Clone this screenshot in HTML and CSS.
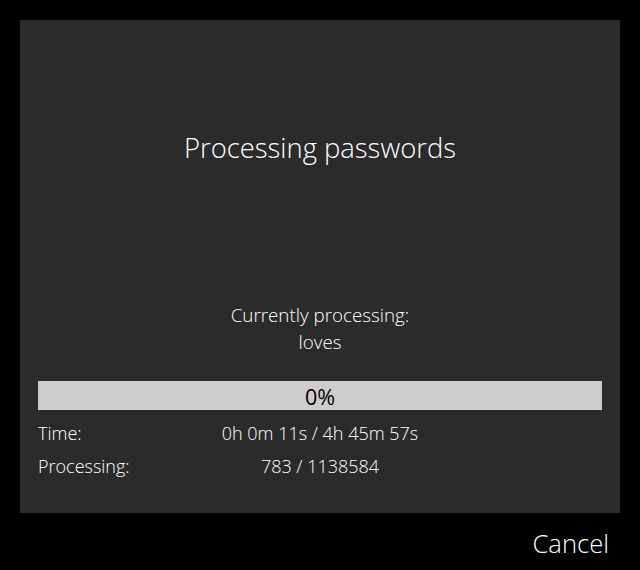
FILE: index.html
```html
<!DOCTYPE html>
<html>
<head>
<meta charset="utf-8">
<link rel="stylesheet" href="styles.css">
</head>
<body>
<div class="screen">
  <div class="panel">
    <h1 class="title">Processing passwords</h1>
    <div class="current">
      <div>Currently processing:</div>
      <div>loves</div>
    </div>
    <div class="bar"><span>0%</span></div>
    <div class="stats">
      <div class="row"><span class="label">Time:</span><span class="value">0h 0m 11s / 4h 45m 57s</span></div>
      <div class="row"><span class="label">Processing:</span><span class="value">783 / 1138584</span></div>
    </div>
  </div>
  <div class="footer"><span class="cancel">Cancel</span></div>
</div>
</body>
</html>
```

FILE: styles.css
```css
html, body {
  margin: 0;
  padding: 0;
  background: #000;
}
.screen {
  width: 640px;
  height: 570px;
  padding: 20px 20px 0 20px;
  box-sizing: border-box;
  font-family: "Open Sans", "Liberation Sans", sans-serif;
  font-weight: 300;
  color: #fff;
}
.panel {
  background: #2b2b2b;
  height: 493px;
  padding: 0 18px;
  box-sizing: border-box;
  display: flex;
  flex-direction: column;
}
.title {
  margin: 108px 0 0 0;
  font-size: 27.4px;
  font-weight: 300;
  line-height: 40px;
  text-align: center;
}
.current {
  margin-top: 134px;
  text-align: center;
  font-size: 18.8px;
  line-height: 27px;
}
.bar {
  margin-top: 25px;
  height: 29px;
  background: #cccccc;
  color: #000;
  font-size: 21.5px;
  font-weight: 400;
  display: flex;
  align-items: center;
  justify-content: center;
  line-height: 29px;
}
.bar span {
  padding-top: 2px;
}
.stats {
  margin-top: 10px;
  display: flex;
  flex-direction: column;
  gap: 6px;
}
.row {
  position: relative;
  font-size: 18px;
  line-height: 27px;
  text-align: center;
}
.row .label {
  position: absolute;
  left: 0;
  top: 0;
}
.footer {
  display: flex;
  justify-content: flex-end;
  padding: 12px 11px 0 0;
}
.cancel {
  font-size: 25.6px;
  line-height: 38px;
}
```
